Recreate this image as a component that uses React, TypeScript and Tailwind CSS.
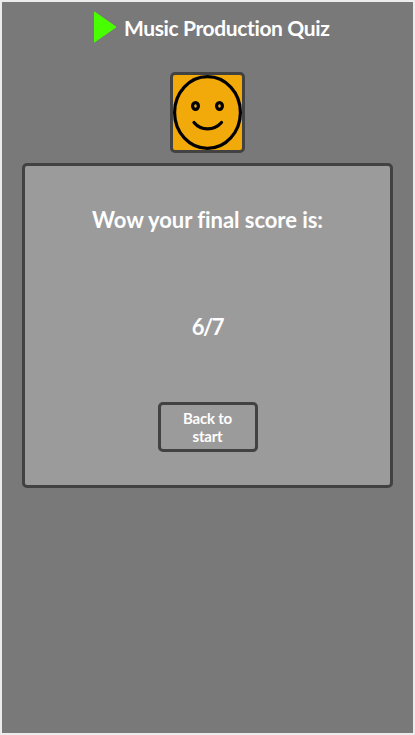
export default function App() {
  return (
    <main className="flex h-[735px] w-[415px] flex-col items-center border-2 border-[#ececec] bg-[#797979] font-['Lato','Open_Sans',sans-serif] font-bold text-white">
      <header className="flex h-[70px] w-full items-start pt-[9px] pl-[91px]">
        <svg className="h-8 w-6 shrink-0" viewBox="0 0 24 32" aria-hidden="true">
          <path d="M1.5 1 L23 16 L1.5 31 Z" fill="#48ff00" stroke="#48ff00" strokeLinejoin="round" />
        </svg>
        <h1 className="mt-px ml-[7px] whitespace-nowrap text-[21px] leading-8 tracking-[-0.38px]">Music Production Quiz</h1>
      </header>
      <div className="h-[81px] w-[75px] shrink-0 rounded-[5px] border-[3px] border-[#424242] bg-[#f2a90a]">
        <svg className="block h-[75px] w-[69px]" viewBox="0 0 69 75" fill="none" stroke="#000" strokeWidth="3.2" strokeLinecap="round" aria-hidden="true">
          <ellipse cx="34.5" cy="37.5" rx="32.9" ry="35.9" />
          <ellipse cx="22.5" cy="31" rx="2.9" ry="3.3" />
          <ellipse cx="46.5" cy="31" rx="2.9" ry="3.3" />
          <path d="M21 47.5 C28 56 41 56 48.5 47.5" />
        </svg>
      </div>
      <section className="mt-[10px] flex h-[325px] w-[371px] shrink-0 flex-col items-center rounded-[5px] border-[3px] border-[#424242] bg-[#9b9b9b]">
        <h2 className="mt-[38px] whitespace-nowrap text-[22px] leading-8 tracking-[-0.05px]">Wow your final score is:</h2>
        <p className="mt-[75px] text-[22px] leading-8 tracking-[-1.5px]">6/7</p>
        <button className="mt-[59px] h-[50px] w-[100px] rounded-[5px] border-[3px] border-[#424242] px-4 text-[15px] leading-[18px] tracking-[-0.2px]">
          Back to start
        </button>
      </section>
    </main>
  );
}
